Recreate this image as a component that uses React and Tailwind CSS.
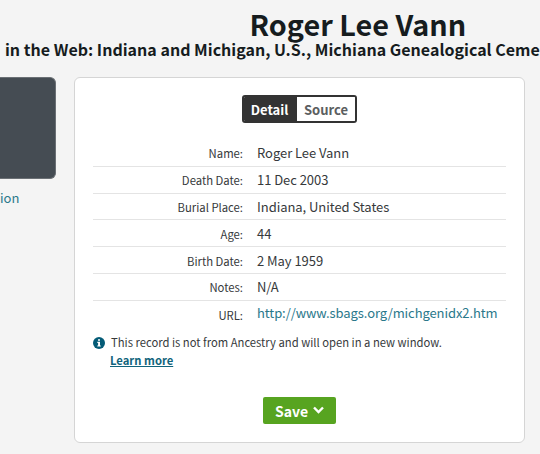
const fields = [
  { label: 'Name', value: 'Roger Lee Vann' },
  { label: 'Death Date', value: '11 Dec 2003' },
  { label: 'Burial Place', value: 'Indiana, United States' },
  { label: 'Age', value: '44' },
  { label: 'Birth Date', value: '2 May 1959' },
  { label: 'Notes', value: 'N/A' },
  { label: 'URL', value: 'http://www.sbags.org/michgenidx2.htm', link: true },
];

const Header = () => (
  <header className="h-[77px] pt-[6px] text-[#161c1e] font-bold whitespace-nowrap">
    <h1 className="pl-[249.5px] text-[28.8px] leading-[36px]">Roger Lee Vann</h1>
    <h2 className="-mt-[2px] pl-[5px] text-[16px] leading-[18px] tracking-[0.01px]">
      in the Web: Indiana and Michigan, U.S., Michiana Genealogical Ceme
    </h2>
  </header>
);

const Toggle = () => (
  <div className="mx-auto flex h-[28px] w-[115px] overflow-hidden rounded-[3px] border-2 border-[#333] text-[13px] leading-[24px] font-bold">
    <button className="w-[53px] bg-[#333] pt-px pr-[2px] text-white">Detail</button>
    <button className="flex-1 bg-white pt-px text-[#5b5e60]">Source</button>
  </div>
);

const Field = ({ label, value, link }) => (
  <div className="flex h-[26.8px] items-center border-b border-[#e4e4e4] last:border-b-0">
    <dt className="w-[150px] shrink-0 pt-px text-right text-[11.3px] leading-[20px]">{label}:</dt>
    <dd
      className={`pl-[14px] text-[13px] leading-[20px] whitespace-nowrap ${
        link ? 'pb-[2px] tracking-[-0.09px] text-[#2a788b]' : 'pt-px tracking-[-0.05px]'
      }`}
    >
      {value}
    </dd>
  </div>
);

const InfoIcon = () => (
  <svg className="h-[12px] w-[12px]" viewBox="0 0 12 12">
    <circle cx="6" cy="6" r="6" fill="#045b76" />
    <path d="M5 2.2h2v1.6H5zM4.3 4.8H7v3.6h.8v1.2H4.3V8.4h.8V6h-.8z" fill="#fff" />
  </svg>
);

const App = () => {
  return (
    <div className="h-[454px] w-[540px] overflow-hidden bg-[#f4f4f4] font-['Noto_Sans_CJK_SC',sans-serif] text-[#36393b]">
      <Header />
      <div className="flex">
        {/* Record preview, cut off by the window */}
        <aside className="w-[74px] shrink-0">
          <div className="h-[102px] w-[56.4px] rounded-r-[6px] border border-l-0 border-[#6b7075] bg-[#454c53]" />
          <a className="mt-[9px] block text-[13px] leading-[20px] text-[#2a788b]">ion</a>
        </aside>

        <main className="h-[366px] w-[451px] rounded-[6px] border border-[#d5d5d5] bg-white px-[18px] pt-[17px]">
          <Toggle />
          <dl className="mt-[17px]">
            {fields.map((field) => (
              <Field key={field.label} {...field} />
            ))}
          </dl>

          <div className="mt-[5px] flex text-[11.25px] leading-[18px]">
            <div className="w-[17px] shrink-0 pt-[4px]">
              <InfoIcon />
            </div>
            <div>
              <p className="pl-px whitespace-nowrap">This record is not from Ancestry and will open in a new window.</p>
              <a className="font-bold text-[#11647c] underline">Learn more</a>
            </div>
          </div>

          <button className="mx-auto mt-[28.4px] flex h-[27px] w-[73px] items-center justify-center gap-[5px] rounded-[2px] bg-[#57a420] text-[14px] leading-[20px] font-bold text-white">
            <span className="pt-px">Save</span>
            <svg className="h-[8px] w-[11px]" viewBox="0 0 11 8" fill="none" stroke="currentColor" strokeWidth="2.4">
              <path d="M1 1.5 5.5 6 10 1.5" />
            </svg>
          </button>
        </main>
      </div>
    </div>
  );
};

export default App;
